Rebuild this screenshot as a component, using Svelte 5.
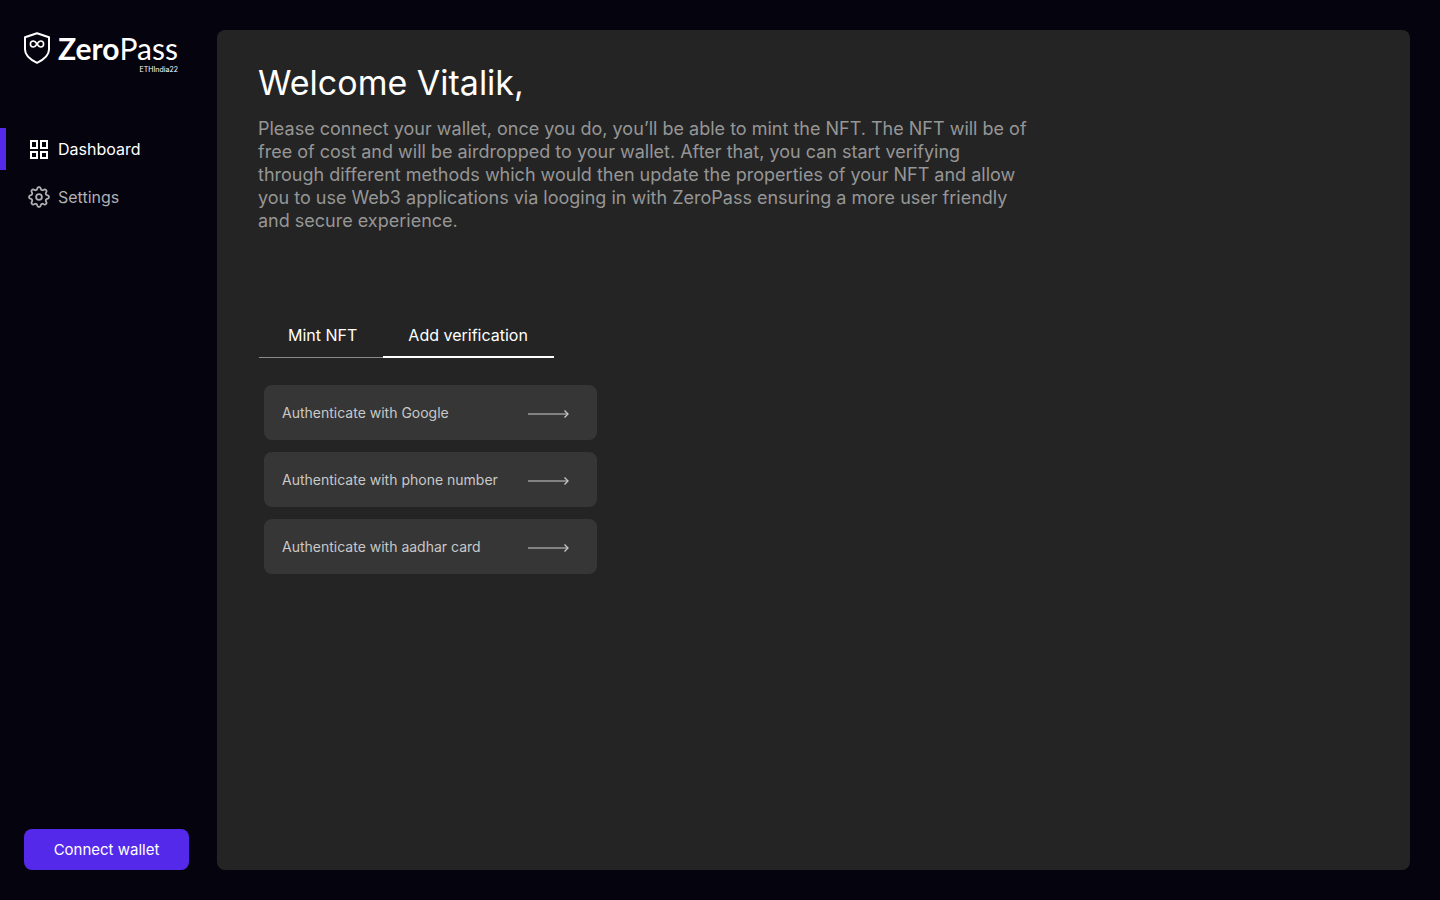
<script lang="ts">
  const links = [
    { id: 'dashboard', label: 'Dashboard' },
    { id: 'settings', label: 'Settings' },
  ];
  const tabs = ['Mint NFT', 'Add verification'];
  const methods = ['Google', 'phone number', 'aadhar card'];

  // outline of the settings cog: a circle with eight rounded teeth
  const cog = Array.from({ length: 96 }, (_, i) => {
    const angle = (i / 96) * Math.PI * 2;
    const r = 8.7 + 1.3 * Math.tanh(1.6 * Math.cos(8 * angle));
    return `${(11 + r * Math.sin(angle)).toFixed(2)},${(11 - r * Math.cos(angle)).toFixed(2)}`;
  }).join(' ');

  let activeLink = $state('dashboard');
  let activeTab = $state('Add verification');
</script>

<div class="layout">
  <aside class="sidebar">
    <a class="logo" href="/" aria-label="ZeroPass">
      <svg width="26" height="32" viewBox="0 0 26 32" fill="none" stroke="currentColor">
        <path
          d="M13 1.2 25 5.2V17.5C25 23 20 27.5 13 30.8C6 27.5 1 23 1 17.5V5.2Z"
          stroke-width="2"
          stroke-linejoin="round"
        />
        <path
          d="M13 12C11.9 10.2 10.9 9 9.4 9a3 3 0 0 0 0 6C10.9 15 11.9 13.8 13 12S15.1 9 16.6 9a3 3 0 0 1 0 6C15.1 15 14.1 13.8 13 12Z"
          stroke-width="1.6"
        />
      </svg>
      <span class="wordmark">
        <span class="name"><b>Zero</b>Pass</span>
        <span class="event">ETHIndia22</span>
      </span>
    </a>

    <nav>
      {#each links as link}
        <a
          class="link"
          class:active={activeLink === link.id}
          href="#{link.id}"
          onclick={() => (activeLink = link.id)}
        >
          {#if link.id === 'dashboard'}
            <svg width="22" height="22" viewBox="0 0 22 22" fill="none" stroke="currentColor" stroke-width="2">
              <rect x="3" y="3" width="6" height="7" />
              <rect x="13" y="3" width="6" height="7" />
              <rect x="3" y="14" width="6" height="6" />
              <rect x="13" y="14" width="6" height="6" />
            </svg>
          {:else}
            <svg width="22" height="22" viewBox="0 0 22 22" fill="none" stroke="currentColor" stroke-width="1.8">
              <circle cx="11" cy="11" r="2.9" />
              <polygon points={cog} stroke-linejoin="round" />
            </svg>
          {/if}
          {link.label}
        </a>
      {/each}
    </nav>

    <button class="connect">Connect wallet</button>
  </aside>

  <main>
    <h1>Welcome Vitalik,</h1>
    <p>
      Please connect your wallet, once you do, you’ll be able to mint the NFT. The NFT will be of<br />
      free of cost and will be airdropped to your wallet. After that, you can start verifying<br />
      through different methods which would then update the properties of your NFT and allow you to use Web3
      applications via looging in with ZeroPass ensuring a more user friendly and secure experience.
    </p>

    <div class="tabs" role="tablist">
      {#each tabs as tab}
        <button
          role="tab"
          class:selected={activeTab === tab}
          aria-selected={activeTab === tab}
          onclick={() => (activeTab = tab)}
        >
          {tab}
        </button>
      {/each}
    </div>

    <div class="methods">
      {#each methods as method}
        <button class="method">
          Authenticate with {method}
          <svg width="42" height="10" viewBox="0 0 42 10" fill="none" stroke="currentColor">
            <path d="M0 6H40" stroke-width="1.4" opacity="0.7" />
            <path d="M36.5 2.5 40 6 36.5 9.5" stroke-width="1.3" />
          </svg>
        </button>
      {/each}
    </div>
  </main>
</div>

<style>
  :global(body) {
    margin: 0;
    background: #05030d;
  }

  .layout {
    box-sizing: border-box;
    display: flex;
    min-height: 100vh;
    padding: 30px 30px 30px 0;
    font-family: Inter, 'Liberation Sans', sans-serif;
    color: #fff;
    background: #05030d;
  }

  button {
    padding: 0;
    font: inherit;
    color: inherit;
    cursor: pointer;
    background: none;
    border: none;
  }

  a {
    color: inherit;
    text-decoration: none;
  }

  .sidebar {
    display: flex;
    flex: none;
    flex-direction: column;
    width: 217px;
  }

  .logo {
    display: flex;
    gap: 8px;
    align-items: flex-start;
    align-self: flex-start;
    padding: 2px 0 0 24px;
  }

  .wordmark {
    display: flex;
    flex-direction: column;
  }

  .name {
    font-family: Lato, sans-serif;
    font-size: 30px;
    line-height: 32px;
  }

  .event {
    font-size: 7px;
    line-height: 12px;
    text-align: right;
  }

  nav {
    display: flex;
    flex-direction: column;
    gap: 6px;
    margin-top: 52px;
  }

  .link {
    display: flex;
    gap: 8px;
    align-items: center;
    height: 42px;
    padding-left: 22px;
    font-size: 16px;
    color: #b0afb3;
    border-left: 6px solid transparent;
  }

  .link.active {
    color: #fff;
    border-left-color: #5429ea;
  }

  .connect {
    height: 41px;
    margin: auto 28px 0 24px;
    font-size: 15px;
    background: #5429ea;
    border-radius: 8px;
  }

  main {
    flex: 1;
    padding: 32px 41px;
    background: #242424;
    border-radius: 8px;
  }

  h1 {
    margin: 0;
    font-size: 34px;
    font-weight: 400;
    line-height: 42px;
  }

  p {
    max-width: 780px;
    margin: 13px 0 0;
    font-size: 18px;
    line-height: 23px;
    color: #969696;
  }

  .tabs {
    display: flex;
    margin: 82px 0 0 1px;
  }

  .tabs button {
    height: 44px;
    padding: 0 26px 1px 25px;
    font-size: 16px;
    border-bottom: 1px solid #8a8a8a;
  }

  .tabs button:first-child {
    padding-right: 26px;
    padding-left: 29px;
  }

  .tabs .selected {
    padding-bottom: 0;
    border-bottom: 2px solid #fff;
  }

  .methods {
    display: flex;
    flex-direction: column;
    gap: 12px;
    max-width: 333px;
    margin: 27px 0 0 6px;
  }

  .method {
    display: flex;
    align-items: center;
    justify-content: space-between;
    height: 55px;
    padding: 0 27px 0 18px;
    font-size: 14px;
    color: #c8c8c8;
    background: #363636;
    border-radius: 8px;
  }
</style>
